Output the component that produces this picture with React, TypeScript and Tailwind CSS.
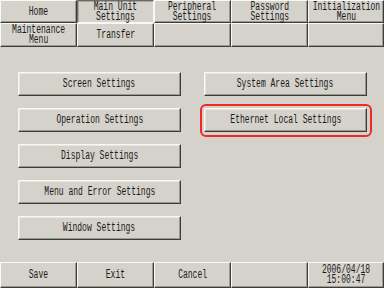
import React from "react";

const font = "font-['Liberation_Mono',monospace] text-[12px] leading-[10px] text-[#1a1a1a]";

function Label({ children }: { children: React.ReactNode }) {
  return (
    <span className="inline-block scale-x-[0.67] text-center whitespace-pre">{children}</span>
  );
}

function Cell({ children, pressed }: { children?: React.ReactNode; pressed?: boolean }) {
  const border = pressed
    ? "border-t border-l border-t-[#6a6a66] border-l-[#6a6a66] border-b border-r border-b-[#f6f6f2] border-r-[#f6f6f2] shadow-[inset_1px_1px_0_#a8a8a2]"
    : "border-t border-l border-t-[#f8f8f4] border-l-[#f8f8f4] border-b border-r border-b-[#3c3c3a] border-r-[#3c3c3a] shadow-[inset_-1px_-1px_0_#9a9a94]";
  return (
    <div className={`flex items-center justify-center bg-[#d4d2ca] ${border} ${font}`}>
      {children ? <Label>{children}</Label> : null}
    </div>
  );
}

function Btn({ children, highlight }: { children: React.ReactNode; highlight?: boolean }) {
  return (
    <div className="relative h-[24px] w-[163px]">
      <div className="flex h-full w-full items-center justify-center border-t border-l border-t-[#f8f8f4] border-l-[#f8f8f4] border-b border-r border-b-[#3c3c3a] border-r-[#3c3c3a] shadow-[inset_-1px_-1px_0_#9a9a94,inset_1px_1px_0_#e6e6e0] bg-[#d4d2ca]">
        <span className={font}>
          <Label>{children}</Label>
        </span>
      </div>
      {highlight ? (
        <div className="pointer-events-none absolute -left-[4px] -top-[4px] -right-[5px] -bottom-[5px] rounded-[6px] border-2 border-[#f02828]" />
      ) : null}
    </div>
  );
}

export default function App() {
  return (
    <div className="flex h-[288px] w-[384px] flex-col overflow-hidden bg-[#d4d2ca]">
      <div className="grid h-[47px] grid-cols-[77px_77px_77px_77px_76px] grid-rows-[23px_24px]">
        <Cell>Home</Cell>
        <Cell pressed>{"Main Unit\nSettings"}</Cell>
        <Cell>{"Peripheral\nSettings"}</Cell>
        <Cell>{"Password\nSettings"}</Cell>
        <Cell>{"Initialization\nMenu"}</Cell>
        <Cell>{"Maintenance\nMenu"}</Cell>
        <Cell>Transfer</Cell>
        <Cell />
        <Cell />
        <Cell />
      </div>
      <div className="flex flex-1 gap-[23px] pl-[18px] pt-[25px]">
        <div className="flex flex-col gap-[12px]">
          <Btn>Screen Settings</Btn>
          <Btn>Operation Settings</Btn>
          <Btn>Display Settings</Btn>
          <Btn>Menu and Error Settings</Btn>
          <Btn>Window Settings</Btn>
        </div>
        <div className="flex flex-col gap-[12px]">
          <Btn>System Area Settings</Btn>
          <Btn highlight>Ethernet Local Settings</Btn>
        </div>
      </div>
      <div className="grid h-[26px] grid-cols-[77px_77px_77px_77px_76px]">
        <Cell>Save</Cell>
        <Cell>Exit</Cell>
        <Cell>Cancel</Cell>
        <Cell />
        <Cell>{"2006/04/18\n15:00:47"}</Cell>
      </div>
    </div>
  );
}
